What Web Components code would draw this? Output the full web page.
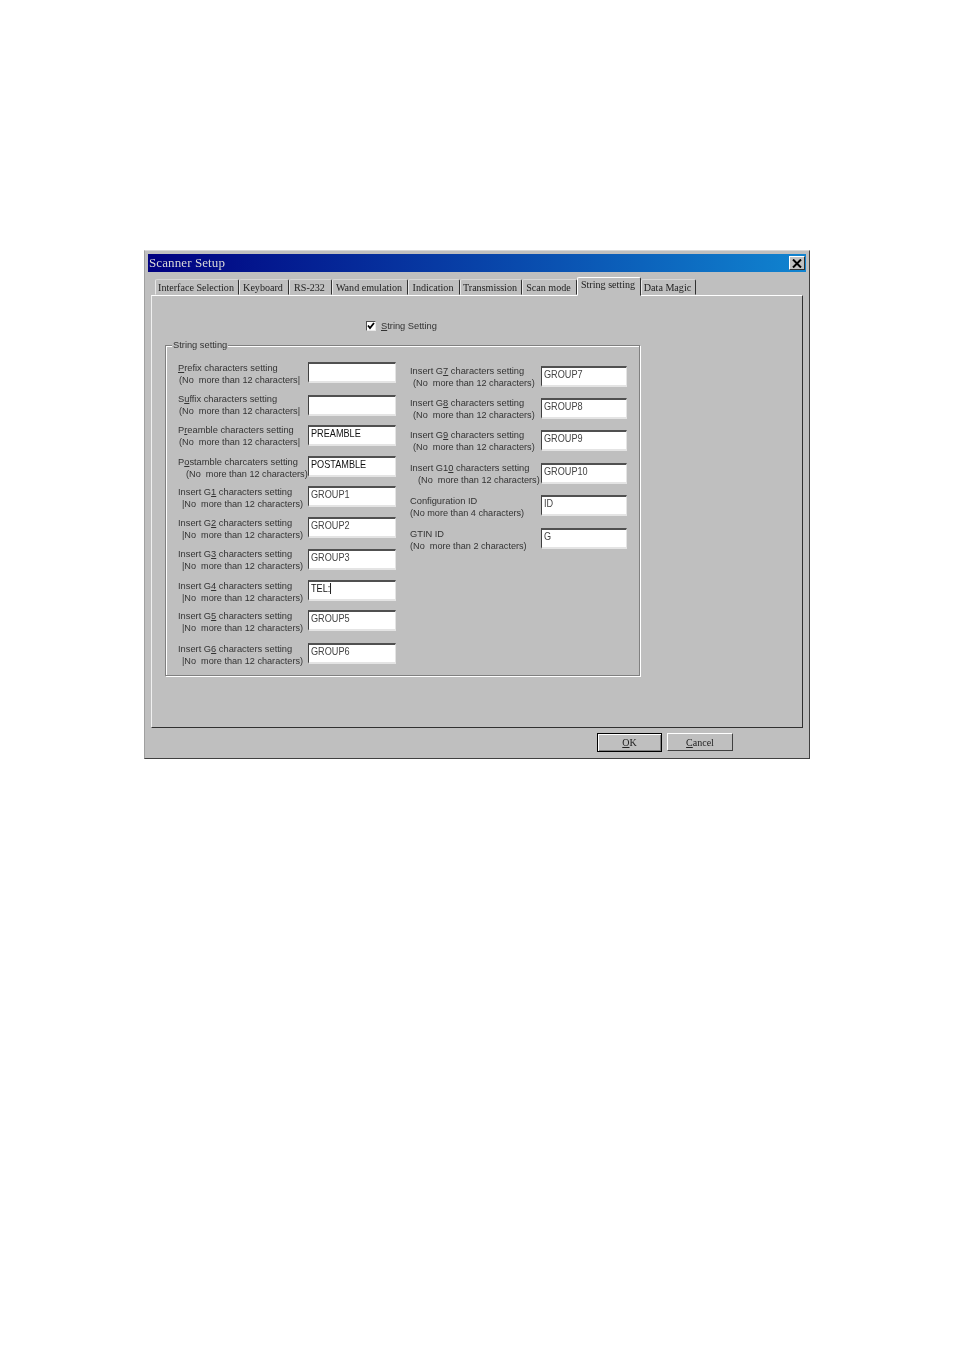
<!DOCTYPE html>
<html lang="en">
  <head>
    <meta charset="UTF-8" />
    <title>Scanner Setup</title>
    <style>
      html, body { margin: 0; background: #fff; }
      body { padding: 250px 0 0 144px; height: 1100px; box-sizing: border-box; overflow: hidden; }
    </style>
  </head>
  <body>
    <scanner-dialog>
      <span slot="title">Scanner Setup</span>
      <tab-item slot="tabs" w="84">Interface Selection</tab-item>
      <tab-item slot="tabs" w="50">Keyboard</tab-item>
      <tab-item slot="tabs" w="43">RS-232</tab-item>
      <tab-item slot="tabs" w="76">Wand emulation</tab-item>
      <tab-item slot="tabs" w="52">Indication</tab-item>
      <tab-item slot="tabs" w="62">Transmission</tab-item>
      <tab-item slot="tabs" w="55">Scan mode</tab-item>
      <tab-item slot="tabs" w="64" selected>String setting</tab-item>
      <tab-item slot="tabs" w="55">Data Magic</tab-item>

      <check-box checked><u>S</u>tring Setting</check-box>

      <group-box caption="String setting">
        <div slot="left">
          <field-row top="16" off="1" lead="11.5" indent="1">
            <u>P</u>refix characters setting
            <span slot="hint">(No&nbsp; more than 12 characters|</span>
          </field-row>
          <field-row top="12" off="-1" lead="11.5" indent="1">
            S<u>u</u>ffix characters setting
            <span slot="hint">(No&nbsp; more than 12 characters|</span>
          </field-row>
          <field-row top="9" off="0" lead="11.5" indent="1" value="PREAMBLE" strong>
            P<u>r</u>eamble characters setting
            <span slot="hint">(No&nbsp; more than 12 characters|</span>
          </field-row>
          <field-row top="10" off="1" lead="11.5" indent="8" value="POSTAMBLE" strong>
            P<u>o</u>stamble charcaters setting
            <span slot="hint">(No&nbsp; more than 12 characters)</span>
          </field-row>
          <field-row top="9" off="1" lead="11.5" indent="4" value="GROUP1">
            Insert G<u>1</u> characters setting
            <span slot="hint">|No&nbsp; more than 12 characters)</span>
          </field-row>
          <field-row top="10" off="1" lead="11.5" indent="4" value="GROUP2">
            Insert G<u>2</u> characters setting
            <span slot="hint">|No&nbsp; more than 12 characters)</span>
          </field-row>
          <field-row top="11" off="0" lead="11.5" indent="4" value="GROUP3">
            Insert G<u>3</u> characters setting
            <span slot="hint">|No&nbsp; more than 12 characters)</span>
          </field-row>
          <field-row top="10" off="1" lead="11.5" indent="4" value="TEL:" caret strong>
            Insert G<u>4</u> characters setting
            <span slot="hint">|No&nbsp; more than 12 characters)</span>
          </field-row>
          <field-row top="9" off="1" lead="11.5" indent="4" value="GROUP5">
            Insert G<u>5</u> characters setting
            <span slot="hint">|No&nbsp; more than 12 characters)</span>
          </field-row>
          <field-row top="12" off="1" lead="11.5" indent="4" value="GROUP6">
            Insert G<u>6</u> characters setting
            <span slot="hint">|No&nbsp; more than 12 characters)</span>
          </field-row>
        </div>
        <div slot="right">
          <field-row top="20" off="-1" lead="12" indent="3" value="GROUP7">
            Insert G<u>7</u> characters setting
            <span slot="hint">(No&nbsp; more than 12 characters)</span>
          </field-row>
          <field-row top="11" off="-1" lead="12" indent="3" value="GROUP8">
            Insert G<u>8</u> characters setting
            <span slot="hint">(No&nbsp; more than 12 characters)</span>
          </field-row>
          <field-row top="11" off="-1" lead="12" indent="3" value="GROUP9">
            Insert G<u>9</u> characters setting
            <span slot="hint">(No&nbsp; more than 12 characters)</span>
          </field-row>
          <field-row top="12" off="-1" lead="12" indent="8" value="GROUP10">
            Insert G1<u>0</u> characters setting
            <span slot="hint">(No&nbsp; more than 12 characters)</span>
          </field-row>
          <field-row top="11" off="0" lead="12" indent="0" value="ID">
            Configuration ID
            <span slot="hint">(No more than 4 characters)</span>
          </field-row>
          <field-row top="12" off="0" lead="12" indent="0" value="G">
            GTIN ID
            <span slot="hint">(No&nbsp; more than 2 characters)</span>
          </field-row>
        </div>
      </group-box>

      <dialog-button slot="buttons" w="65" default><u>O</u>K</dialog-button>
      <dialog-button slot="buttons" w="66"><u>C</u>ancel</dialog-button>
    </scanner-dialog>
  </body>
  <script>
    const SANS = '"Liberation Sans", Arial, sans-serif';
    const SERIF = '"Liberation Serif", "Times New Roman", serif';

    // outer window: title bar, tab strip, page and the button row
    class ScannerDialog extends HTMLElement {
      constructor() {
        super();
        this.attachShadow({ mode: "open" });
        this.shadowRoot.innerHTML = `
          <style>
            :host {
              display: block;
              box-sizing: border-box;
              width: 666px;
              height: 509px;
              padding: 3px;
              background: #bfbfbf;
              border: 1px solid;
              border-color: #d8d8d8 #404040 #404040 #a0a0a0;
              filter: blur(0.3px);
              font-family: ${SANS};
              color: #333;
            }
            .title {
              display: flex;
              align-items: center;
              justify-content: space-between;
              height: 18px;
              padding: 0 1px;
              background: linear-gradient(90deg, #000080, #1084d0);
              color: #d8d8d8;
              font: 13px ${SERIF};
              letter-spacing: 0.1px;
            }
            .close {
              box-sizing: border-box;
              width: 16px;
              height: 14px;
              background: #c0c0c0;
              border: 1px solid;
              border-color: #fff #303030 #303030 #fff;
              display: flex;
              align-items: center;
              justify-content: center;
            }
            .tabs {
              display: flex;
              align-items: flex-end;
              height: 23px;
              padding-left: 7px;
              position: relative;
            }
            .page {
              box-sizing: border-box;
              width: 652px;
              height: 433px;
              margin-left: 3px;
              padding: 25px 0 0 13px;
              border: 1px solid;
              border-color: #fff #303030 #303030 #f0f0f0;
            }
            .buttons {
              display: flex;
              gap: 5px;
              padding: 5px 0 0 449px;
            }
          </style>
          <div class="title">
            <slot name="title"></slot>
            <div class="close">
              <svg width="10" height="9" viewBox="0 0 10 9">
                <path d="M1 0.5 L9 8.5 M9 0.5 L1 8.5" stroke="#000" stroke-width="2" fill="none" />
              </svg>
            </div>
          </div>
          <div class="tabs"><slot name="tabs"></slot></div>
          <div class="page"><slot></slot></div>
          <div class="buttons"><slot name="buttons"></slot></div>
        `;
      }
    }

    class TabItem extends HTMLElement {
      constructor() {
        super();
        this.attachShadow({ mode: "open" });
        this.shadowRoot.innerHTML = `
          <style>
            :host {
              display: flex;
              align-items: center;
              justify-content: center;
              box-sizing: border-box;
              height: 16px;
              width: ${this.getAttribute("w")}px;
              padding-right: 2px;
              border: 1px solid transparent;
              border-right-color: #303030;
              border-top-color: #d8d8d8;
              border-left-color: #e8e8e8;
              border-radius: 2px 2px 0 0;
              font: 10.1px ${SERIF};
              white-space: nowrap;
              color: #222;
            }
            :host([selected]) {
              height: 19px;
              margin-bottom: -1px;
              padding-bottom: 4px;
              border-color: #fff #303030 #bfbfbf #fff;
              background: #bfbfbf;
              position: relative;
              z-index: 1;
            }
          </style>
          <slot></slot>
        `;
      }
    }

    class CheckBox extends HTMLElement {
      constructor() {
        super();
        this.attachShadow({ mode: "open" });
        this.shadowRoot.innerHTML = `
          <style>
            :host {
              display: flex;
              align-items: center;
              gap: 5px;
              margin-left: 201px;
              height: 10px;
              margin-bottom: 14px;
              font-size: 9.3px;
              white-space: nowrap;
            }
            .box {
              box-sizing: border-box;
              width: 10px;
              height: 10px;
              background: #fff;
              border: 1px solid;
              border-color: #505050 #e8e8e8 #e8e8e8 #505050;
            }
            svg { display: block; }
          </style>
          <div class="box">
            <svg width="8" height="8" viewBox="0 0 8 8">
              <path d="M1 3.5 L3 6 L7 1" stroke="#000" stroke-width="1.8" fill="none" />
            </svg>
          </div>
          <span><slot></slot></span>
        `;
      }
    }

    // etched frame with two columns of rows
    class GroupBox extends HTMLElement {
      constructor() {
        super();
        this.attachShadow({ mode: "open" });
        this.shadowRoot.innerHTML = `
          <style>
            :host {
              display: block;
              box-sizing: border-box;
              position: relative;
              width: 475px;
              height: 331px;
              border: 1px solid #808080;
              box-shadow: 1px 1px 0 #fff, inset 1px 1px 0 #fff;
            }
            .caption {
              position: absolute;
              left: 6px;
              top: -6px;
              padding: 0 1px;
              background: #bfbfbf;
              font-size: 9.3px;
              line-height: 11px;
            }
            .cols { display: flex; padding-left: 12px; }
            .col { width: 232px; flex: none; --edit-w: 88px; }
            .col + .col { --edit-w: 86px; --label-w: 131px; }
          </style>
          <div class="caption">${this.getAttribute("caption")}</div>
          <div class="cols">
            <div class="col"><slot name="left"></slot></div>
            <div class="col"><slot name="right"></slot></div>
          </div>
        `;
      }
    }

    // one label (two lines) plus a sunken edit box
    class FieldRow extends HTMLElement {
      constructor() {
        super();
        this.attachShadow({ mode: "open" });
        let value = this.getAttribute("value") || "";
        let caret = this.hasAttribute("caret") ? '<i class="caret"></i>' : "";
        this.shadowRoot.innerHTML = `
          <style>
            :host {
              display: flex;
              align-items: flex-start;
              height: 21px;
              margin-top: ${this.getAttribute("top") || 0}px;
              font-size: 9.3px;
              white-space: nowrap;
            }
            .label {
              width: var(--label-w, 130px);
              flex: none;
              margin-top: ${this.getAttribute("off") || 0}px;
              line-height: ${this.getAttribute("lead") || 11}px;
            }
            .hint {
              display: block;
              margin-left: ${this.getAttribute("indent") || 0}px;
              font-size: 9.15px;
            }
            .edit {
              box-sizing: border-box;
              width: var(--edit-w, 88px);
              height: 21px;
              padding: 0 0 0 1.5px;
              background: #fff;
              border: 1px solid;
              border-width: 2px 1px 2px 1px;
              border-color: #505050 #e4e4e4 #e4e4e4 #404040;
              line-height: 13px;
              font-size: 10.5px;
              color: #444;
            }
            .text {
              display: inline-block;
              transform: scaleX(0.87);
              transform-origin: left center;
            }
            :host([strong]) .edit { color: #111; }
            .caret {
              display: inline-block;
              width: 1px;
              height: 11px;
              background: #000;
              vertical-align: -2px;
            }
          </style>
          <div class="label">
            <slot></slot>
            <span class="hint"><slot name="hint"></slot></span>
          </div>
          <div class="edit"><span class="text">${value}${caret}</span></div>
        `;
      }
    }

    class DialogButton extends HTMLElement {
      constructor() {
        super();
        this.attachShadow({ mode: "open" });
        this.shadowRoot.innerHTML = `
          <style>
            :host {
              display: flex;
              align-items: center;
              justify-content: center;
              box-sizing: border-box;
              height: 18px;
              width: ${this.getAttribute("w")}px;
              border: 1px solid;
              border-color: #fff #404040 #404040 #fff;
              font: 10px ${SERIF};
              color: #222;
            }
            :host([default]) {
              border-color: #000;
              box-shadow: inset 1px 1px 0 #fff, inset -1px -1px 0 #808080;
              height: 19px;
            }
          </style>
          <slot></slot>
        `;
      }
    }

    customElements.define("scanner-dialog", ScannerDialog);
    customElements.define("tab-item", TabItem);
    customElements.define("check-box", CheckBox);
    customElements.define("group-box", GroupBox);
    customElements.define("field-row", FieldRow);
    customElements.define("dialog-button", DialogButton);
  </script>
</html>
